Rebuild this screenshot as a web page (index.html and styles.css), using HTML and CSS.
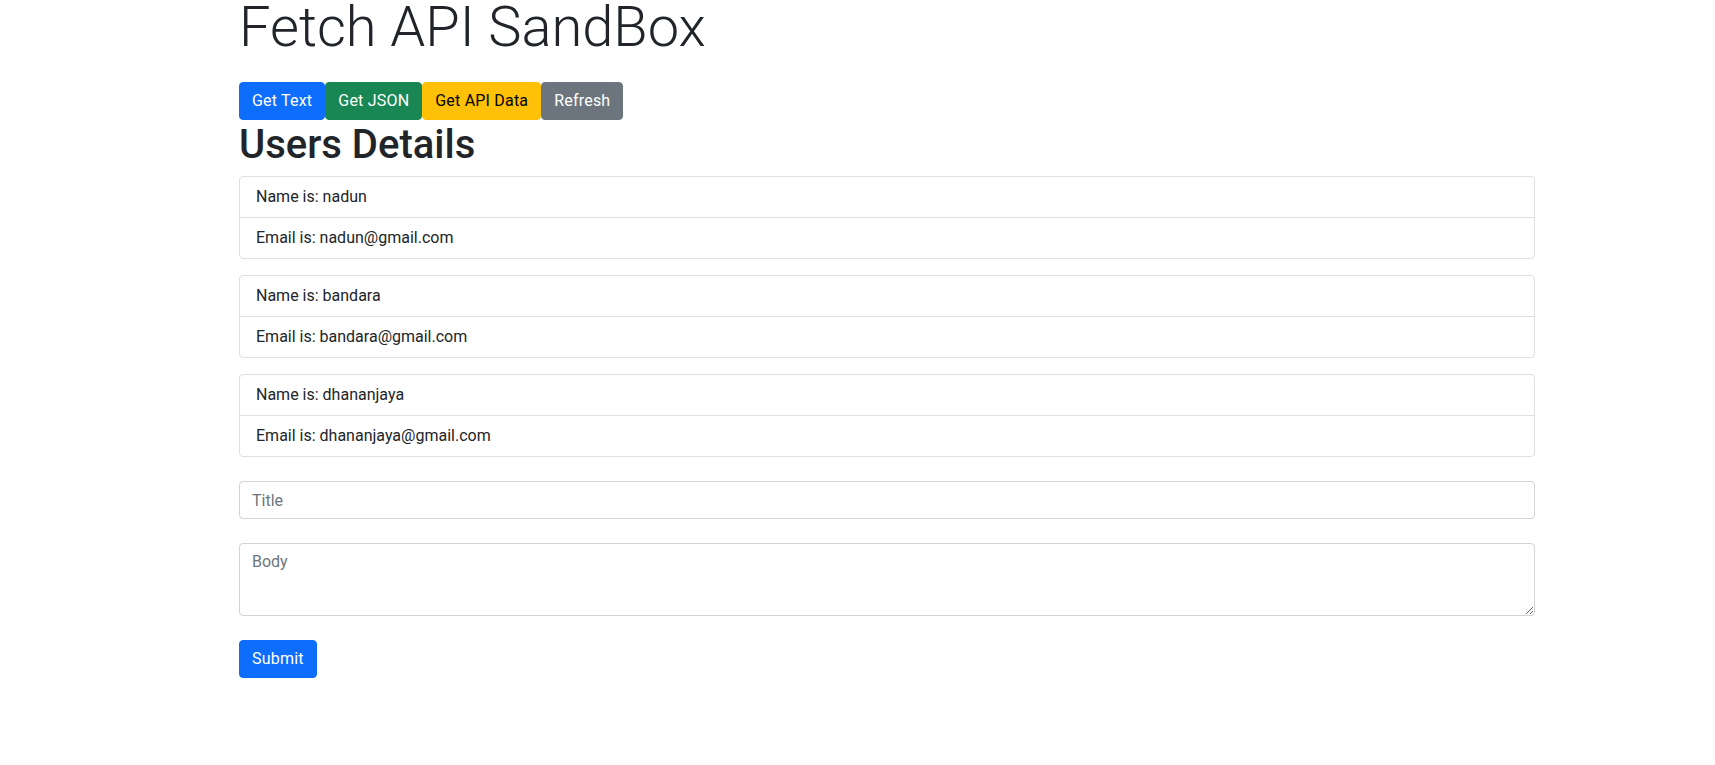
FILE: index.html
```html
<!DOCTYPE html>
<html lang="en">
<head>
<meta charset="utf-8">
<title>Fetch API SandBox</title>
<link rel="stylesheet" href="styles.css">
</head>
<body>
<div class="container">
  <h1 class="page-title">Fetch API SandBox</h1>
  <div class="btn-row">
    <button class="btn btn-primary">Get Text</button>
    <button class="btn btn-success">Get JSON</button>
    <button class="btn btn-warning">Get API Data</button>
    <button class="btn btn-secondary">Refresh</button>
  </div>
  <div class="output">
    <h2 class="section-title">Users Details</h2>
    <ul class="list-group">
      <li class="list-item">Name is: nadun</li>
      <li class="list-item">Email is: nadun@gmail.com</li>
    </ul>
    <ul class="list-group">
      <li class="list-item">Name is: bandara</li>
      <li class="list-item">Email is: bandara@gmail.com</li>
    </ul>
    <ul class="list-group">
      <li class="list-item">Name is: dhananjaya</li>
      <li class="list-item">Email is: dhananjaya@gmail.com</li>
    </ul>
  </div>
  <form class="post-form">
    <div class="form-group">
      <input class="form-control" type="text" placeholder="Title">
    </div>
    <div class="form-group">
      <textarea class="form-control form-textarea" placeholder="Body"></textarea>
    </div>
    <button type="button" class="btn btn-primary">Submit</button>
  </form>
</div>
</body>
</html>
```
FILE: styles.css
```css
* {
  box-sizing: border-box;
}

html, body {
  margin: 0;
  padding: 0;
  background: #fff;
}

body {
  font-family: Roboto, "Liberation Sans", sans-serif;
  font-size: 16px;
  line-height: 1.5;
  color: #212529;
}

.container {
  width: 1296px;
  margin-left: 239px;
}

.page-title {
  font-size: 56px;
  font-weight: 300;
  line-height: 54px;
  margin: 0;
}

.btn-row {
  display: flex;
  margin-top: 28px;
}

.btn {
  display: inline-block;
  font-family: inherit;
  font-size: 16px;
  font-weight: 400;
  line-height: 24px;
  letter-spacing: 0.2px;
  padding: 6px 12px;
  border: 1px solid transparent;
  border-radius: 4px;
  cursor: pointer;
}

.btn-primary {
  background: #0d6efd;
  border-color: #0d6efd;
  color: #fff;
}

.btn-success {
  background: #198754;
  border-color: #198754;
  color: #fff;
}

.btn-warning {
  background: #ffc107;
  border-color: #ffc107;
  color: #000;
}

.btn-secondary {
  background: #6c757d;
  border-color: #6c757d;
  color: #fff;
}

.section-title {
  font-size: 40px;
  font-weight: 500;
  line-height: 1.2;
  margin: 1px 0 7px 0;
}

.list-group {
  list-style: none;
  margin: 0 0 16px 0;
  padding: 0;
  border: 1px solid #dfdfdf;
  border-radius: 4px;
}

.list-item {
  padding: 8px 16px;
  line-height: 24px;
}

.list-item + .list-item {
  border-top: 1px solid #dfdfdf;
}

.post-form {
  padding-top: 8px;
}

.form-group {
  margin-bottom: 24px;
}

.form-control {
  display: block;
  width: 100%;
  height: 38px;
  padding: 6px 12px;
  font-family: inherit;
  font-size: 16px;
  line-height: 24px;
  color: #212529;
  background: #fff;
  border: 1px solid #ced4da;
  border-radius: 4px;
  margin: 0;
}

.form-control::placeholder {
  color: #6c757d;
  opacity: 1;
}

.form-textarea {
  height: 73px;
  resize: vertical;
}
```
